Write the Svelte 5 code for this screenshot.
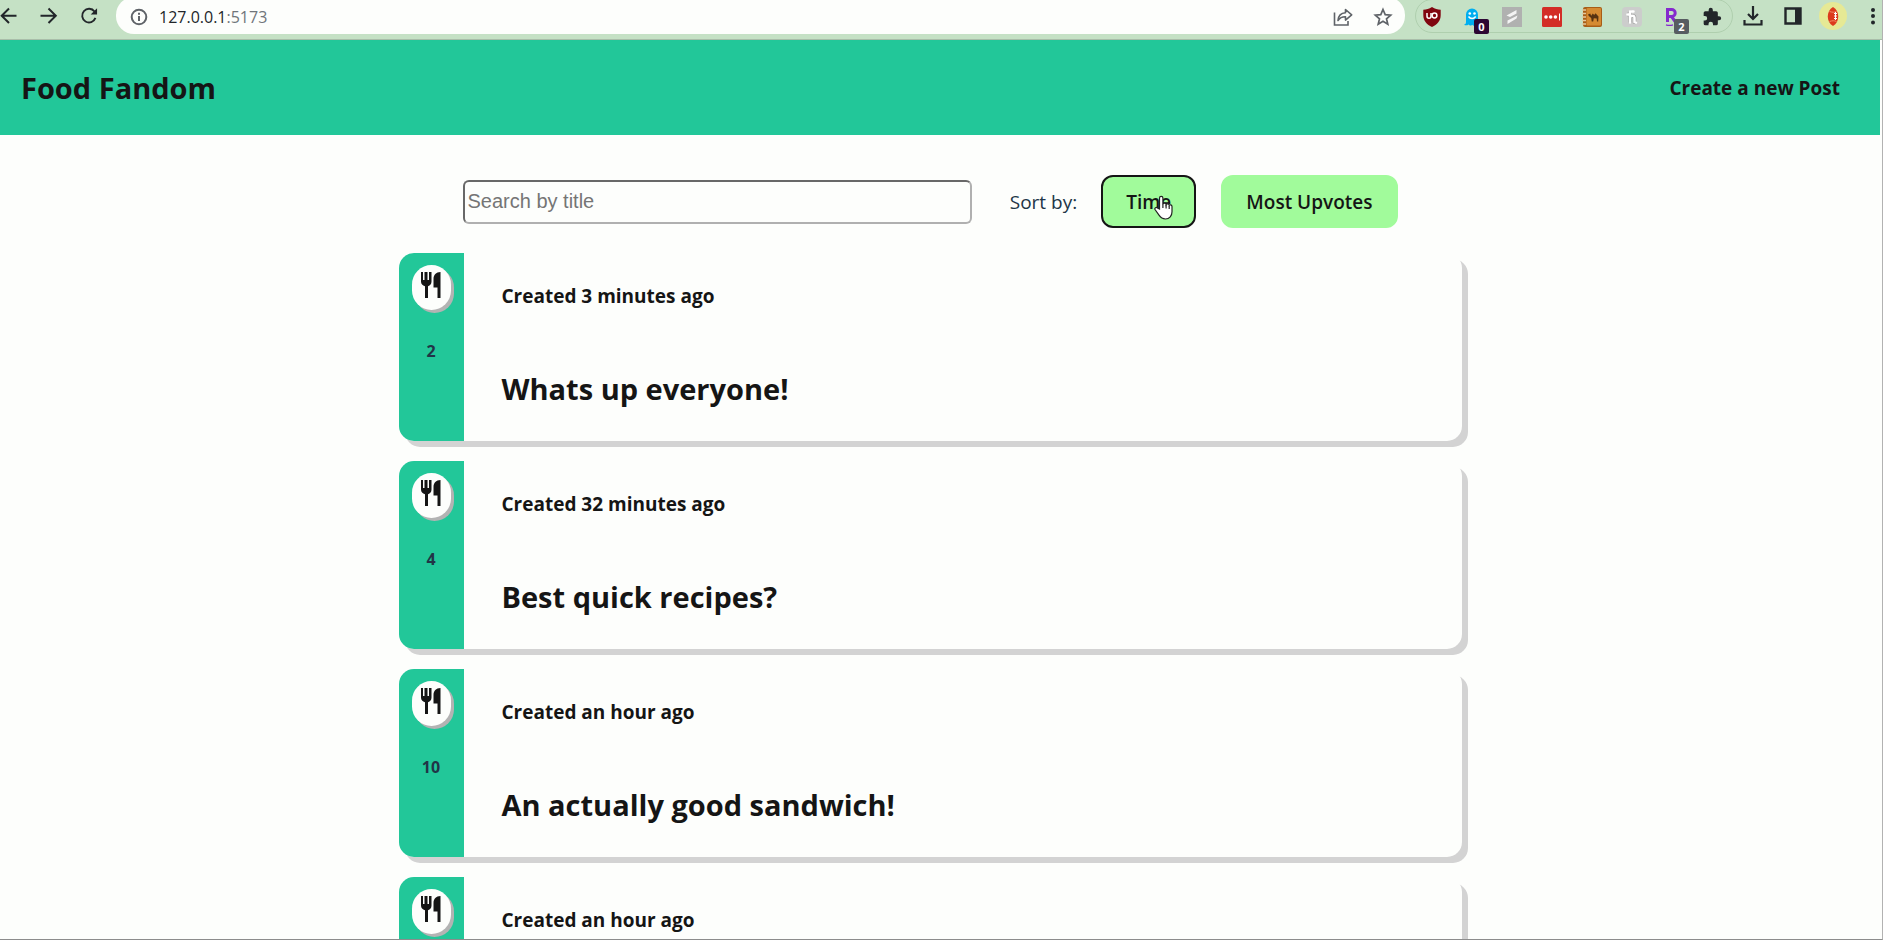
<script>
  const posts = [
    { created: 'Created 3 minutes ago', title: 'Whats up everyone!', votes: 2 },
    { created: 'Created 32 minutes ago', title: 'Best quick recipes?', votes: 4 },
    { created: 'Created an hour ago', title: 'An actually good sandwich!', votes: 10 },
    { created: 'Created an hour ago', title: '', votes: '' },
  ];
  let search = $state('');
</script>

<div class="window">
  <div class="toolbar">
    <button class="nav" aria-label="Back">
      <svg width="18" height="18" viewBox="0 0 18 18"><path d="M16.500 8.700H2M9 1.500 1.700 8.700 9 16" /></svg>
    </button>
    <button class="nav" aria-label="Forward">
      <svg width="18" height="18" viewBox="0 0 18 18"><path d="M.5 8.700H15M8.500 1.500l7.300 7.200L8.500 16" /></svg>
    </button>
    <button class="nav" aria-label="Reload">
      <svg width="18" height="18" viewBox="0 0 19 18">
        <path d="M15.300 4.300A7.200 7.200 0 1 0 16.300 11" />
        <path class="head" d="M18 .8v6.700h-6.700z" />
      </svg>
    </button>

    <div class="address">
      <svg width="18" height="18" viewBox="0 0 18 18" fill="none" stroke="#5f6368" stroke-width="2">
        <circle cx="9" cy="9" r="7.300" /><path d="M9 8v5M9 4.700v2" />
      </svg>
      <span class="url">127.0.0.1<span class="port">:5173</span></span>
      <button class="tool" aria-label="Share">
        <svg width="20" height="20" viewBox="0 0 20 20" fill="none" stroke="#5f6368" stroke-width="1.600">
          <path d="M1.500 5.500v12.500h13.500v-4" />
          <path d="M5 13.500c.4-5 3-7.500 7.500-7.700V2.500l6.200 5.300-6.200 5.300V9.800C9 9.700 6.800 10.800 5 13.500z" stroke-linejoin="round" />
        </svg>
      </button>
      <button class="tool" aria-label="Bookmark">
        <svg width="20" height="20" viewBox="0 0 20 20" fill="none" stroke="#5f6368" stroke-width="1.700">
          <path d="m10 2.500 2.200 5.100 5.500.5-4.200 3.700 1.300 5.400-4.800-2.900-4.800 2.900 1.300-5.400-4.200-3.700 5.500-.5z" />
        </svg>
      </button>
    </div>

    <div class="extensions">
      <button class="ext" aria-label="Content blocker">
        <svg width="20" height="20" viewBox="0 0 20 20">
          <path d="M10 0c3 2 5.500 2.600 8.700 2.700V8c0 6-3.500 9.500-8.700 12C4.800 17.500 1.300 14 1.300 8V2.700C4.500 2.600 7 2 10 0z" fill="#800610" />
          <path d="M5 6v3.200a2 2 0 0 0 4 0V6" fill="none" stroke="#fff" stroke-width="1.500" />
          <circle cx="12.500" cy="8.500" r="2.400" fill="none" stroke="#fff" stroke-width="1.500" />
        </svg>
      </button>
      <button class="ext" aria-label="Tracker blocker">
        <svg width="20" height="20" viewBox="0 0 20 20">
          <path d="M4 15V7.500a6 6 0 0 1 12 0V15c0 2 .8 3 1.500 3.500-2 .8-3 .1-3.800-.8-1 1.300-2.400 1.300-3.500 0-1.300 1.300-2.700 1.200-3.700-.2-1.300 1-3 1.200-4.500.2C3.500 17 4 16.500 4 15z" fill="#00aef0" />
          <circle cx="7.800" cy="6.500" r="1.300" fill="#fff" /><circle cx="12.500" cy="6.500" r="1.300" fill="#fff" />
          <path d="M6.500 9.500c1.800 2.700 5.400 2.700 7.200 0" fill="none" stroke="#fff" stroke-width="1.400" />
        </svg>
        <span class="badge dark">0</span>
      </button>
      <button class="ext" aria-label="Svelte tools">
        <svg width="20" height="20" viewBox="0 0 20 20">
          <path d="M0 0h20v20H0z" fill="#b0b1b0" />
          <path d="M4.500 8.500 14.500 3v3.500L8 10zM5.500 13.500 15.500 8.500 14.500 11.500 5.500 17z" fill="#f4f4f4" />
        </svg>
      </button>
      <button class="ext" aria-label="Password manager">
        <svg width="20" height="20" viewBox="0 0 20 20">
          <rect width="20" height="20" rx="1.500" fill="#d32d27" />
          <g fill="#fff"><circle cx="4" cy="10" r="1.800" /><circle cx="8.700" cy="10" r="1.800" /><circle cx="13.400" cy="10" r="1.800" /><path d="M17 6.500h1v7h-1z" /></g>
        </svg>
      </button>
      <button class="ext" aria-label="Price tracker">
        <svg width="20" height="20" viewBox="0 0 20 20">
          <rect x="1" width="19" height="20" rx="2" fill="#a85d17" />
          <rect x="4.500" y="1" width="14.500" height="17.500" rx="1" fill="#d58a32" />
          <path d="M0 3h4M0 6.500h4M0 10h4M0 13.500h4M0 17h4" stroke="#e4c9a0" stroke-width="1.300" />
          <path d="M6 7.500 8.200 6.500l1 2.300 1.600-2.300 1.400 1.500 1.300-1.700 3 3.200-.3 5h-1.200l-.3-3-2.900-.2-.6 3.200h-1.500L9.200 11 6.800 9z" fill="#573211" />
        </svg>
      </button>
      <button class="ext" aria-label="Coupons">
        <svg width="20" height="20" viewBox="0 0 20 20">
          <rect width="20" height="20" rx="4" fill="#cccdcc" />
          <g fill="none" stroke="#999" stroke-width="3.500"><path d="M8 4.500v11M8 10c2-2 4.500-1.500 4.500.5V15l1.500.6M5 7.500h3" /></g>
          <g fill="none" stroke="#fff" stroke-width="2.500" stroke-linecap="round"><path d="M8 4.500v11M8 10c2-2 4.500-1.500 4.500.5V15l1.500.6M5.500 7.500H8M10 4.500h1.500" /></g>
        </svg>
      </button>
      <button class="ext" aria-label="Rakuten">
        <svg width="20" height="20" viewBox="0 0 20 20" fill="none" stroke="#8529cd">
          <path d="M5.500 15V2.500h4.200a3.500 3.500 0 0 1 0 7H5.500M9.500 9.500l4 5.500" stroke-width="3" /><path d="M4 17.800c2 .7 5 .7 7 0" stroke-width="1.300" />
        </svg>
        <span class="badge">2</span>
      </button>
      <button class="ext" aria-label="Extensions">
        <svg width="20" height="20" viewBox="0 0 24 24" fill="#22262a">
          <path d="M20.500 11H19V7a2 2 0 0 0-2-2h-4V3.500a2.500 2.500 0 0 0-5 0V5H4a2 2 0 0 0-2 2v3.800h1.500a2.700 2.700 0 0 1 0 5.400H2V20a2 2 0 0 0 2 2h3.800v-1.500a2.700 2.700 0 0 1 5.400 0V22H17a2 2 0 0 0 2-2v-4h1.500a2.500 2.500 0 0 0 0-5z" />
        </svg>
      </button>
    </div>

    <div class="browser-tools">
      <button class="ext" aria-label="Downloads">
        <svg width="20" height="20" viewBox="0 0 20 20" fill="none" stroke="#22262a" stroke-width="2.200">
          <path d="M10 0v13M5 8l5 5 5-5M1.500 14v4.500h17V14" />
        </svg>
      </button>
      <button class="ext" aria-label="Side panel">
        <svg width="18" height="18" viewBox="0 0 18 18"><path d="M1.500 1.500h15v15h-15z" fill="none" stroke="#22262a" stroke-width="2.400" /><path d="M11 1h6v16h-6z" fill="#22262a" /></svg>
      </button>
      <button class="ext" aria-label="Profile">
        <svg width="28" height="28" viewBox="0 0 28 28">
          <circle cx="14" cy="14" r="14" fill="#e6e995" />
          <path d="M14 5c7 4 7 15 0 19C7 20 7 9 14 5z" fill="#dc3a1c" />
          <path d="M10.500 9.500c3 1 4.500 1 7 0M10.500 19.500c3-1 4.500-1 7 0" fill="none" stroke="#f08a64" stroke-width="1" />
          <path d="M16.500 10v8M15 11.500h3M15 14h3M15 16.500h3" stroke="#fff" stroke-width="1" />
        </svg>
      </button>
      <button class="ext" aria-label="Menu">
        <svg width="6" height="18" viewBox="0 0 6 18" fill="#22262a"><circle cx="3" cy="3" r="2" /><circle cx="3" cy="9" r="2" /><circle cx="3" cy="15.500" r="2" /></svg>
      </button>
    </div>
  </div>

  <header>
    <h1>Food Fandom</h1>
    <a href="#new">Create a new Post</a>
  </header>

  <main>
    <div class="controls">
      <input type="text" placeholder="Search by title" aria-label="Search by title" bind:value={search} />
      <span class="label">Sort by:</span>
      <div class="sort">
        <button class="active">Time</button>
        <svg class="pointer" width="19" height="25" viewBox="0 0 19 25">
          <path d="M5.500 14V3a1.700 1.700 0 0 1 3.400 0v6.200c.3-1.500 3-1.300 3.200.4.600-1.200 2.900-.9 3.100.7.800-.9 2.700-.5 2.800 1.200v5.300c0 4-2.500 7.200-6.500 7.200-3.500 0-5-1.500-6.500-3.800L1 14.500c-.7-1.500 1.300-2.700 2.500-1.500z" fill="#fff" stroke="#222" stroke-width="1.200" />
          <path d="M8.900 9v4M12.100 10v3.500M15.200 11v3" stroke="#222" stroke-width="1.200" />
        </svg>
      </div>
      <button>Most Upvotes</button>
    </div>

    {#each posts as post}
      <article>
        <div class="votes">
          <button aria-label="Upvote">
            <svg width="20" height="26" viewBox="0 0 20 26" fill="#151515">
              <path d="M0 0h2v8h1.500V0h3v8H8V0h2.500v9.500c0 2.600-1.300 4-3.500 4.800V26H4V14.300C1.500 13.500 0 12 0 9.500z" />
              <path d="M19.500 0v26h-3V15.500h-4V7c0-4 2.500-7 7-7z" />
            </svg>
          </button>
          <span>{post.votes}</span>
        </div>
        <div class="body">
          <p>{post.created}</p>
          <h2>{post.title}</h2>
        </div>
      </article>
    {/each}
  </main>
</div>

<style>
  :global(body) {
    margin: 0;
  }
  .window {
    box-sizing: border-box;
    height: 100vh;
    overflow: hidden;
    display: flex;
    flex-direction: column;
    border-right: 1px solid #b2b2b2;
    border-bottom: 1px solid #8c8c8c;
    background: #fdfefc;
    color: #151515;
    font-family: "Open Sans", "Noto Sans", sans-serif;
  }
  button {
    font-family: inherit;
    color: inherit;
    border: 0;
    padding: 0;
    cursor: pointer;
  }
  svg {
    display: block;
    flex: none;
  }

  .toolbar {
    display: flex;
    flex: none;
    align-items: flex-start;
    height: 39px;
    border-bottom: 1px solid #a9bda9;
    background: #c5e1c5;
  }
  .nav {
    display: flex;
    align-items: center;
    width: 40px;
    height: 32px;
    flex: none;
    background: none;
  }
  .nav path {
    fill: none;
    stroke: #22262a;
    stroke-width: 2;
  }
  .nav .head {
    fill: #22262a;
    stroke: none;
  }
  .address {
    display: flex;
    align-items: center;
    flex: 1;
    min-width: 0;
    box-sizing: border-box;
    height: 37px;
    margin: -3px 10px 0 -4px;
    padding: 2px 12px 0 14px;
    border-radius: 18px;
    background: #fdfefc;
  }
  .url {
    flex: 1;
    margin-left: 11px;
    font-size: 16px;
    line-height: 20px;
    color: #22262a;
  }
  .port {
    color: #70757a;
  }
  .tool {
    display: flex;
    margin-left: 20px;
    background: none;
  }
  .extensions {
    display: flex;
    flex: none;
    box-sizing: border-box;
    height: 34px;
    margin-top: -1px;
    border: 1px solid #afcfae;
    border-radius: 17px;
  }
  .ext {
    position: relative;
    display: flex;
    flex: none;
    align-items: center;
    justify-content: center;
    width: 40px;
    height: 34px;
    background: none;
  }
  .extensions .ext:first-child {
    width: 32px;
    margin-right: 4px;
  }
  .badge {
    position: absolute;
    left: 22px;
    top: 19px;
    width: 15px;
    height: 15px;
    border-radius: 2px;
    background: #575c61;
    color: #fff;
    font-size: 11px;
    font-weight: 700;
    line-height: 15px;
  }
  .badge.dark {
    background: #2d0733;
  }
  .browser-tools {
    display: flex;
    flex: none;
    margin-right: -11px;
  }
  .browser-tools .ext {
    height: 32px;
  }

  header {
    display: flex;
    flex: none;
    align-items: center;
    justify-content: space-between;
    box-sizing: border-box;
    height: 95px;
    margin-right: 2px;
    padding: 0 40px 0 21px;
    background: #22c799;
  }
  h1,
  h2,
  p {
    margin: 0;
  }
  h1,
  h2 {
    font-size: 29px;
    line-height: 40px;
    font-weight: 700;
  }
  header a {
    color: inherit;
    text-decoration: none;
    font-size: 19px;
    line-height: 24px;
    font-weight: 700;
  }

  main {
    display: flex;
    flex-direction: column;
    align-items: center;
    gap: 20px;
    padding: 40px 22px 0 0;
  }
  .controls {
    display: flex;
    align-items: center;
    width: 935px;
    max-width: 100%;
    margin-bottom: 5px;
  }
  input {
    box-sizing: border-box;
    flex: 1;
    min-width: 0;
    height: 44px;
    padding: 1px 3px;
    border: 2px solid;
    border-color: #686868 #b0b0b0 #b0b0b0 #686868;
    border-radius: 6px;
    background: #fdfefc;
    font: 20px "Liberation Sans", Arial, sans-serif;
  }
  input::placeholder {
    color: #757575;
  }
  .label {
    margin: 0 24px 0 38px;
    color: #213547;
    font-size: 19px;
    line-height: 24px;
  }
  .controls button {
    height: 53px;
    padding: 0 23px;
    border: 2px solid #a1fb9b;
    border-radius: 12px;
    background: #a1fb9b;
    font-size: 19px;
    font-weight: 600;
  }
  .controls .active {
    border-color: #151515;
  }
  .sort {
    position: relative;
    margin-right: 25px;
  }
  .pointer {
    position: absolute;
    left: 53px;
    top: 20px;
  }

  article {
    display: flex;
    box-sizing: border-box;
    width: 1063px;
    max-width: 100%;
    min-height: 188px;
    border-radius: 15px;
    background: #fdfefc;
    box-shadow: 6px 6px 0 #d3d3d3;
  }
  .votes {
    display: flex;
    flex-direction: column;
    align-items: center;
    gap: 31px;
    box-sizing: border-box;
    width: 65px;
    padding-top: 12px;
    border-radius: 15px 0 0 15px;
    background: #22c799;
    color: #213547;
    font-size: 16px;
    font-weight: 700;
    line-height: 20px;
  }
  .votes button {
    display: flex;
    justify-content: center;
    width: 39px;
    height: 45px;
    padding-top: 7px;
    border-radius: 20px;
    background: #fdfefc;
    box-shadow: 3px 3px 0 #b3b3b3;
  }
  .body {
    display: flex;
    flex-direction: column;
    gap: 61px;
    padding: 31px 38px;
  }
  .body p {
    font-size: 19px;
    line-height: 24px;
    font-weight: 700;
  }
</style>
